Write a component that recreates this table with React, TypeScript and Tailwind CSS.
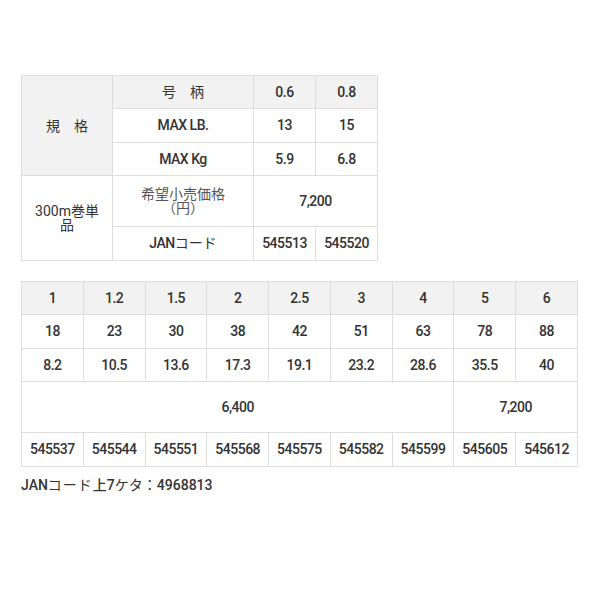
import React from "react";

const font = { fontFamily: "Roboto, 'Noto Sans CJK JP', sans-serif" };

const base = "border border-[#dddddd] text-center align-middle p-0 text-[#333]";
const td = base + " text-[14px] leading-[15px] font-medium tracking-[-0.5px]";
const th = td + " bg-[#f2f2f2]";
const jp = base + " text-[14px] font-normal leading-[14px]";

export default function App() {
  const sizes = ["1", "1.2", "1.5", "2", "2.5", "3", "4", "5", "6"];
  const lb = ["18", "23", "30", "38", "42", "51", "63", "78", "88"];
  const kg = ["8.2", "10.5", "13.6", "17.3", "19.1", "23.2", "28.6", "35.5", "40"];
  const jan = ["545537", "545544", "545551", "545568", "545575", "545582", "545599", "545605", "545612"];
  return (
    <div className="w-[600px] h-[600px] bg-white pl-[21px] pt-[75px]" style={font}>
      <table className="border-collapse table-fixed w-[357px]">
        <colgroup>
          <col className="w-[91px]" />
          <col className="w-[141px]" />
          <col className="w-[62px]" />
          <col className="w-[62px]" />
        </colgroup>
        <tbody>
          <tr className="h-[33px]">
            <td rowSpan={3} className={jp + " bg-[#f2f2f2]"}>規　格</td>
            <td className={jp + " bg-[#f2f2f2]"}>号　柄</td>
            <td className={th}>0.6</td>
            <td className={th}>0.8</td>
          </tr>
          <tr className="h-[34px]">
            <td className={td}>MAX LB.</td>
            <td className={td}>13</td>
            <td className={td}>15</td>
          </tr>
          <tr className="h-[33px]">
            <td className={td}>MAX Kg</td>
            <td className={td}>5.9</td>
            <td className={td}>6.8</td>
          </tr>
          <tr className="h-[51px]">
            <td rowSpan={2} className={jp + " px-[13px]"}>300m巻単品</td>
            <td className={jp + " text-[#555] px-[27px]"}>希望小売価格（円）</td>
            <td colSpan={2} className={td}>7,200</td>
          </tr>
          <tr className="h-[34px]">
            <td className={td}>
              JAN<span className="font-normal tracking-normal">コード</span>
            </td>
            <td className={td}>545513</td>
            <td className={td}>545520</td>
          </tr>
        </tbody>
      </table>

      <table className="border-collapse table-fixed w-[557px] mt-[20px]">
        <tbody>
          <tr className="h-[33px]">
            {sizes.map((s) => (
              <td key={s} className={th}>{s}</td>
            ))}
          </tr>
          <tr className="h-[34px]">
            {lb.map((s, i) => (
              <td key={i} className={td}>{s}</td>
            ))}
          </tr>
          <tr className="h-[33px]">
            {kg.map((s, i) => (
              <td key={i} className={td}>{s}</td>
            ))}
          </tr>
          <tr className="h-[51px]">
            <td colSpan={7} className={td}>6,400</td>
            <td colSpan={2} className={td}>7,200</td>
          </tr>
          <tr className="h-[34px]">
            {jan.map((s, i) => (
              <td key={i} className={td}>{s}</td>
            ))}
          </tr>
        </tbody>
      </table>

      <div className="mt-[10px] text-[14px] leading-[16px] font-medium text-[#333]">
        JAN<span className="font-normal tracking-[1px]">コード</span>上7<span className="font-normal">ケタ：</span>4968813
      </div>
    </div>
  );
}
